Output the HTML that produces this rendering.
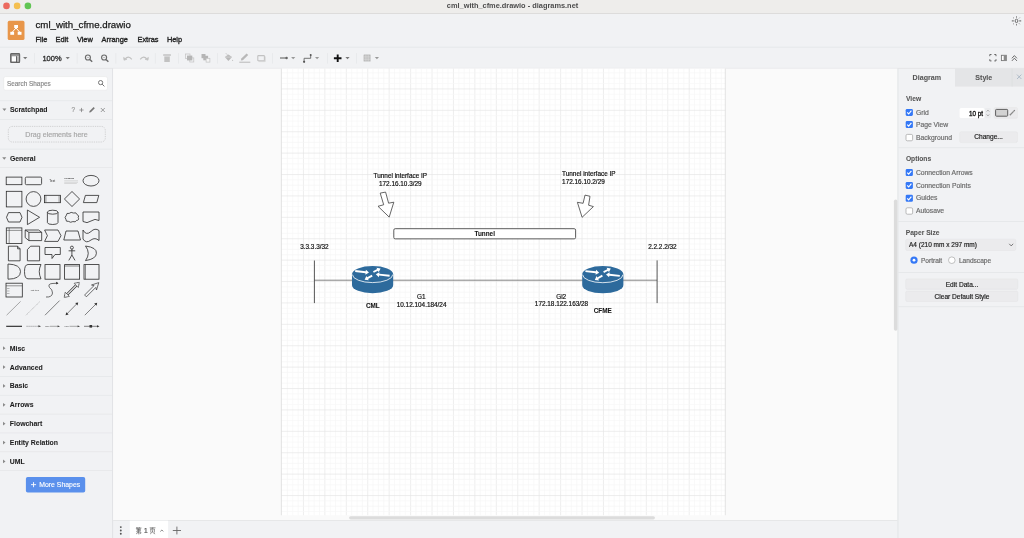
<!DOCTYPE html>
<html><head><meta charset="utf-8"><title>cml_with_cfme.drawio - diagrams.net</title>
<style>html,body{margin:0;padding:0;width:1024px;height:538px;overflow:hidden;background:#f1f2f4;font-family:"Liberation Sans",sans-serif}</style>
</head><body><svg width="1024" height="538" viewBox="0 0 1024 538" style="display:block;font-family:'Liberation Sans',sans-serif;will-change:transform"><rect x="0" y="0" width="1024" height="538" fill="#f1f2f4"/><rect x="0" y="0" width="1024" height="13.3" fill="#eeedeb"/><rect x="0" y="13" width="1024" height="0.8" fill="#d9d8d6"/><circle cx="6.5" cy="5.9" r="3.3" fill="#ec6a5e"/><circle cx="17.1" cy="5.9" r="3.3" fill="#f4bf4f"/><circle cx="27.9" cy="5.9" r="3.3" fill="#61c554"/><text x="512.5" y="7.8" font-size="7.4" fill="#4d4d4d" font-weight="bold" text-anchor="middle" >cml_with_cfme.drawio - diagrams.net</text><rect x="0" y="46.8" width="1024" height="0.7" fill="#e2e3e5"/><rect x="0" y="67.9" width="1024" height="0.7" fill="#dfe0e2"/><rect x="7.7" y="20.8" width="16.8" height="19.3" rx="1.6" fill="#e8964a"/><g fill="#fff"><rect x="14.2" y="25" width="3.8" height="3"/><rect x="10.3" y="31.8" width="3.8" height="3"/><rect x="17.7" y="31.8" width="3.8" height="3"/></g><path d="M16,28 L12.4,32 M16,28 L19.6,32" stroke="#fff" stroke-width="1.0" fill="none"/><text x="35.5" y="27.7" font-size="9.7" fill="#1a1a1a" font-weight="normal" text-anchor="start" stroke="#1a1a1a" stroke-width="0.25" >cml_with_cfme.drawio</text><text x="35.5" y="41.8" font-size="7.4" fill="#222" font-weight="normal" text-anchor="start" stroke="#222" stroke-width="0.33" >File</text><text x="55.5" y="41.8" font-size="7.4" fill="#222" font-weight="normal" text-anchor="start" stroke="#222" stroke-width="0.33" >Edit</text><text x="76.9" y="41.8" font-size="7.4" fill="#222" font-weight="normal" text-anchor="start" stroke="#222" stroke-width="0.33" >View</text><text x="101.6" y="41.8" font-size="7.4" fill="#222" font-weight="normal" text-anchor="start" stroke="#222" stroke-width="0.33" >Arrange</text><text x="137.5" y="41.8" font-size="7.4" fill="#222" font-weight="normal" text-anchor="start" stroke="#222" stroke-width="0.33" >Extras</text><text x="166.9" y="41.8" font-size="7.4" fill="#222" font-weight="normal" text-anchor="start" stroke="#222" stroke-width="0.33" >Help</text><g stroke="#6a6a6a" fill="none"><ellipse cx="1016.5" cy="20.9" rx="1.35" ry="1.75" stroke-width="1.0"/><line x1="1011.8" y1="20.9" x2="1013.8" y2="20.9" stroke-width="1.1"/><line x1="1019.2" y1="20.9" x2="1021.2" y2="20.9" stroke-width="1.1"/><line x1="1016.5" y1="16.4" x2="1016.5" y2="17.6" stroke-width="1.0"/><line x1="1016.5" y1="24.2" x2="1016.5" y2="25.4" stroke-width="1.0"/><line x1="1019.00" y1="23.40" x2="1019.80" y2="24.20" stroke-width="0.8"/><line x1="1019.00" y1="18.40" x2="1019.80" y2="17.60" stroke-width="0.8"/><line x1="1014.00" y1="23.40" x2="1013.20" y2="24.20" stroke-width="0.8"/><line x1="1014.00" y1="18.40" x2="1013.20" y2="17.60" stroke-width="0.8"/></g><rect x="112.3" y="68.6" width="0.8" height="470" fill="#dcdde0"/><rect x="3.7" y="76.6" width="103.8" height="13.6" rx="2" fill="#fff" stroke="#e3e3e3" stroke-width="0.5"/><text x="7" y="85.8" font-size="6.4" fill="#8a8a8a" font-weight="normal" text-anchor="start" stroke="#8a8a8a" stroke-width="0.18" >Search Shapes</text><g stroke="#666" stroke-width="0.9" fill="none"><circle cx="100.6" cy="82.6" r="2.1"/><line x1="102.1" y1="84.1" x2="104.4" y2="86.4"/></g><rect x="0" y="100.5" width="112.3" height="0.6" fill="#e2e3e5"/><path d="M2.4,108.6 L6.4,108.6 L4.4,111 Z" fill="#888"/><text x="10" y="112.3" font-size="6.9" fill="#1d1d1d" font-weight="bold" text-anchor="start" stroke="#1d1d1d" stroke-width="0.06" >Scratchpad</text><text x="71.5" y="112.4" font-size="6.4" fill="#999" font-weight="normal" text-anchor="start" stroke="#999" stroke-width="0.18" >?</text><g stroke="#777" stroke-width="0.7"><line x1="79.4" y1="110" x2="83.6" y2="110"/><line x1="81.5" y1="107.9" x2="81.5" y2="112.1"/></g><path d="M89.2,112.6 L89.6,111 L93.6,107 L94.8,108.2 L90.8,112.2 Z" fill="#777"/><g stroke="#777" stroke-width="0.7"><line x1="100.8" y1="108" x2="104.8" y2="112"/><line x1="104.8" y1="108" x2="100.8" y2="112"/></g><rect x="0" y="119" width="112.3" height="0.6" fill="#e2e3e5"/><rect x="8.3" y="126.4" width="97" height="15.6" rx="4" fill="none" stroke="#b8b8b8" stroke-width="0.7" stroke-dasharray="0.8,1"/><text x="56.5" y="136.6" font-size="7.1" fill="#a8a8a8" font-weight="normal" text-anchor="middle" stroke="#a8a8a8" stroke-width="0.18" >Drag elements here</text><rect x="0" y="148.8" width="112.3" height="0.6" fill="#e2e3e5"/><path d="M2.2,157.3 L6.3,157.3 L4.25,159.8 Z" fill="#888"/><text x="9.9" y="161.1" font-size="6.9" fill="#1d1d1d" font-weight="bold" text-anchor="start" stroke="#1d1d1d" stroke-width="0.06" >General</text><rect x="0" y="167.3" width="112.3" height="0.6" fill="#e2e3e5"/><rect x="0" y="338.30" width="112.3" height="0.6" fill="#e2e3e5"/><path d="M3.0,346.30 L5.5,348.20 L3.0,350.10 Z" fill="#8a8a8a"/><text x="9.8" y="350.70" font-size="6.9" fill="#1d1d1d" font-weight="bold" text-anchor="start" stroke="#1d1d1d" stroke-width="0.06" >Misc</text><rect x="0" y="357.17" width="112.3" height="0.6" fill="#e2e3e5"/><path d="M3.0,365.17 L5.5,367.07 L3.0,368.97 Z" fill="#8a8a8a"/><text x="9.8" y="369.57" font-size="6.9" fill="#1d1d1d" font-weight="bold" text-anchor="start" stroke="#1d1d1d" stroke-width="0.06" >Advanced</text><rect x="0" y="376.04" width="112.3" height="0.6" fill="#e2e3e5"/><path d="M3.0,384.04 L5.5,385.94 L3.0,387.84 Z" fill="#8a8a8a"/><text x="9.8" y="388.44" font-size="6.9" fill="#1d1d1d" font-weight="bold" text-anchor="start" stroke="#1d1d1d" stroke-width="0.06" >Basic</text><rect x="0" y="394.91" width="112.3" height="0.6" fill="#e2e3e5"/><path d="M3.0,402.91 L5.5,404.81 L3.0,406.71 Z" fill="#8a8a8a"/><text x="9.8" y="407.31" font-size="6.9" fill="#1d1d1d" font-weight="bold" text-anchor="start" stroke="#1d1d1d" stroke-width="0.06" >Arrows</text><rect x="0" y="413.78" width="112.3" height="0.6" fill="#e2e3e5"/><path d="M3.0,421.78 L5.5,423.68 L3.0,425.58 Z" fill="#8a8a8a"/><text x="9.8" y="426.18" font-size="6.9" fill="#1d1d1d" font-weight="bold" text-anchor="start" stroke="#1d1d1d" stroke-width="0.06" >Flowchart</text><rect x="0" y="432.65" width="112.3" height="0.6" fill="#e2e3e5"/><path d="M3.0,440.65 L5.5,442.55 L3.0,444.45 Z" fill="#8a8a8a"/><text x="9.8" y="445.05" font-size="6.9" fill="#1d1d1d" font-weight="bold" text-anchor="start" stroke="#1d1d1d" stroke-width="0.06" >Entity Relation</text><rect x="0" y="451.52" width="112.3" height="0.6" fill="#e2e3e5"/><path d="M3.0,459.52 L5.5,461.42 L3.0,463.32 Z" fill="#8a8a8a"/><text x="9.8" y="463.92" font-size="6.9" fill="#1d1d1d" font-weight="bold" text-anchor="start" stroke="#1d1d1d" stroke-width="0.06" >UML</text><rect x="0" y="470.39" width="112.3" height="0.6" fill="#e2e3e5"/><rect x="25.9" y="477" width="59.3" height="15.6" rx="1.8" fill="#5a90ec"/><path d="M33.55,482.1 L33.55,487.2 M31,484.65 L36.1,484.65" stroke="#fff" stroke-width="0.9"/><text x="39.2" y="487.1" font-size="6.9" fill="#fff" font-weight="normal" text-anchor="start" stroke="#fff" stroke-width="0.12" >More Shapes</text><rect x="113.1" y="68.6" width="784.4" height="451.7" fill="#fafafa"/><rect x="281.4" y="68.6" width="443.9" height="446.6" fill="#fff"/><g stroke-width="0.65"><line x1="287.38" y1="68.6" x2="287.38" y2="515.2" stroke="#f6f6f6"/><line x1="292.73" y1="68.6" x2="292.73" y2="515.2" stroke="#f6f6f6"/><line x1="298.09" y1="68.6" x2="298.09" y2="515.2" stroke="#f6f6f6"/><line x1="303.45" y1="68.6" x2="303.45" y2="515.2" stroke="#e4e4e4"/><line x1="308.81" y1="68.6" x2="308.81" y2="515.2" stroke="#f6f6f6"/><line x1="314.16" y1="68.6" x2="314.16" y2="515.2" stroke="#f6f6f6"/><line x1="319.52" y1="68.6" x2="319.52" y2="515.2" stroke="#f6f6f6"/><line x1="324.88" y1="68.6" x2="324.88" y2="515.2" stroke="#e4e4e4"/><line x1="330.24" y1="68.6" x2="330.24" y2="515.2" stroke="#f6f6f6"/><line x1="335.59" y1="68.6" x2="335.59" y2="515.2" stroke="#f6f6f6"/><line x1="340.95" y1="68.6" x2="340.95" y2="515.2" stroke="#f6f6f6"/><line x1="346.31" y1="68.6" x2="346.31" y2="515.2" stroke="#e4e4e4"/><line x1="351.67" y1="68.6" x2="351.67" y2="515.2" stroke="#f6f6f6"/><line x1="357.02" y1="68.6" x2="357.02" y2="515.2" stroke="#f6f6f6"/><line x1="362.38" y1="68.6" x2="362.38" y2="515.2" stroke="#f6f6f6"/><line x1="367.74" y1="68.6" x2="367.74" y2="515.2" stroke="#e4e4e4"/><line x1="373.10" y1="68.6" x2="373.10" y2="515.2" stroke="#f6f6f6"/><line x1="378.45" y1="68.6" x2="378.45" y2="515.2" stroke="#f6f6f6"/><line x1="383.81" y1="68.6" x2="383.81" y2="515.2" stroke="#f6f6f6"/><line x1="389.17" y1="68.6" x2="389.17" y2="515.2" stroke="#e4e4e4"/><line x1="394.53" y1="68.6" x2="394.53" y2="515.2" stroke="#f6f6f6"/><line x1="399.88" y1="68.6" x2="399.88" y2="515.2" stroke="#f6f6f6"/><line x1="405.24" y1="68.6" x2="405.24" y2="515.2" stroke="#f6f6f6"/><line x1="410.60" y1="68.6" x2="410.60" y2="515.2" stroke="#e4e4e4"/><line x1="415.96" y1="68.6" x2="415.96" y2="515.2" stroke="#f6f6f6"/><line x1="421.31" y1="68.6" x2="421.31" y2="515.2" stroke="#f6f6f6"/><line x1="426.67" y1="68.6" x2="426.67" y2="515.2" stroke="#f6f6f6"/><line x1="432.03" y1="68.6" x2="432.03" y2="515.2" stroke="#e4e4e4"/><line x1="437.39" y1="68.6" x2="437.39" y2="515.2" stroke="#f6f6f6"/><line x1="442.75" y1="68.6" x2="442.75" y2="515.2" stroke="#f6f6f6"/><line x1="448.10" y1="68.6" x2="448.10" y2="515.2" stroke="#f6f6f6"/><line x1="453.46" y1="68.6" x2="453.46" y2="515.2" stroke="#e4e4e4"/><line x1="458.82" y1="68.6" x2="458.82" y2="515.2" stroke="#f6f6f6"/><line x1="464.17" y1="68.6" x2="464.17" y2="515.2" stroke="#f6f6f6"/><line x1="469.53" y1="68.6" x2="469.53" y2="515.2" stroke="#f6f6f6"/><line x1="474.89" y1="68.6" x2="474.89" y2="515.2" stroke="#e4e4e4"/><line x1="480.25" y1="68.6" x2="480.25" y2="515.2" stroke="#f6f6f6"/><line x1="485.61" y1="68.6" x2="485.61" y2="515.2" stroke="#f6f6f6"/><line x1="490.96" y1="68.6" x2="490.96" y2="515.2" stroke="#f6f6f6"/><line x1="496.32" y1="68.6" x2="496.32" y2="515.2" stroke="#e4e4e4"/><line x1="501.68" y1="68.6" x2="501.68" y2="515.2" stroke="#f6f6f6"/><line x1="507.03" y1="68.6" x2="507.03" y2="515.2" stroke="#f6f6f6"/><line x1="512.39" y1="68.6" x2="512.39" y2="515.2" stroke="#f6f6f6"/><line x1="517.75" y1="68.6" x2="517.75" y2="515.2" stroke="#e4e4e4"/><line x1="523.11" y1="68.6" x2="523.11" y2="515.2" stroke="#f6f6f6"/><line x1="528.46" y1="68.6" x2="528.46" y2="515.2" stroke="#f6f6f6"/><line x1="533.82" y1="68.6" x2="533.82" y2="515.2" stroke="#f6f6f6"/><line x1="539.18" y1="68.6" x2="539.18" y2="515.2" stroke="#e4e4e4"/><line x1="544.54" y1="68.6" x2="544.54" y2="515.2" stroke="#f6f6f6"/><line x1="549.89" y1="68.6" x2="549.89" y2="515.2" stroke="#f6f6f6"/><line x1="555.25" y1="68.6" x2="555.25" y2="515.2" stroke="#f6f6f6"/><line x1="560.61" y1="68.6" x2="560.61" y2="515.2" stroke="#e4e4e4"/><line x1="565.97" y1="68.6" x2="565.97" y2="515.2" stroke="#f6f6f6"/><line x1="571.33" y1="68.6" x2="571.33" y2="515.2" stroke="#f6f6f6"/><line x1="576.68" y1="68.6" x2="576.68" y2="515.2" stroke="#f6f6f6"/><line x1="582.04" y1="68.6" x2="582.04" y2="515.2" stroke="#e4e4e4"/><line x1="587.40" y1="68.6" x2="587.40" y2="515.2" stroke="#f6f6f6"/><line x1="592.75" y1="68.6" x2="592.75" y2="515.2" stroke="#f6f6f6"/><line x1="598.11" y1="68.6" x2="598.11" y2="515.2" stroke="#f6f6f6"/><line x1="603.47" y1="68.6" x2="603.47" y2="515.2" stroke="#e4e4e4"/><line x1="608.83" y1="68.6" x2="608.83" y2="515.2" stroke="#f6f6f6"/><line x1="614.18" y1="68.6" x2="614.18" y2="515.2" stroke="#f6f6f6"/><line x1="619.54" y1="68.6" x2="619.54" y2="515.2" stroke="#f6f6f6"/><line x1="624.90" y1="68.6" x2="624.90" y2="515.2" stroke="#e4e4e4"/><line x1="630.26" y1="68.6" x2="630.26" y2="515.2" stroke="#f6f6f6"/><line x1="635.62" y1="68.6" x2="635.62" y2="515.2" stroke="#f6f6f6"/><line x1="640.97" y1="68.6" x2="640.97" y2="515.2" stroke="#f6f6f6"/><line x1="646.33" y1="68.6" x2="646.33" y2="515.2" stroke="#e4e4e4"/><line x1="651.69" y1="68.6" x2="651.69" y2="515.2" stroke="#f6f6f6"/><line x1="657.04" y1="68.6" x2="657.04" y2="515.2" stroke="#f6f6f6"/><line x1="662.40" y1="68.6" x2="662.40" y2="515.2" stroke="#f6f6f6"/><line x1="667.76" y1="68.6" x2="667.76" y2="515.2" stroke="#e4e4e4"/><line x1="673.12" y1="68.6" x2="673.12" y2="515.2" stroke="#f6f6f6"/><line x1="678.47" y1="68.6" x2="678.47" y2="515.2" stroke="#f6f6f6"/><line x1="683.83" y1="68.6" x2="683.83" y2="515.2" stroke="#f6f6f6"/><line x1="689.19" y1="68.6" x2="689.19" y2="515.2" stroke="#e4e4e4"/><line x1="694.55" y1="68.6" x2="694.55" y2="515.2" stroke="#f6f6f6"/><line x1="699.90" y1="68.6" x2="699.90" y2="515.2" stroke="#f6f6f6"/><line x1="705.26" y1="68.6" x2="705.26" y2="515.2" stroke="#f6f6f6"/><line x1="710.62" y1="68.6" x2="710.62" y2="515.2" stroke="#e4e4e4"/><line x1="715.98" y1="68.6" x2="715.98" y2="515.2" stroke="#f6f6f6"/><line x1="721.34" y1="68.6" x2="721.34" y2="515.2" stroke="#f6f6f6"/><line x1="281.4" y1="72.87" x2="725.3" y2="72.87" stroke="#f6f6f6"/><line x1="281.4" y1="78.22" x2="725.3" y2="78.22" stroke="#f6f6f6"/><line x1="281.4" y1="83.57" x2="725.3" y2="83.57" stroke="#f6f6f6"/><line x1="281.4" y1="88.92" x2="725.3" y2="88.92" stroke="#e4e4e4"/><line x1="281.4" y1="94.27" x2="725.3" y2="94.27" stroke="#f6f6f6"/><line x1="281.4" y1="99.62" x2="725.3" y2="99.62" stroke="#f6f6f6"/><line x1="281.4" y1="104.97" x2="725.3" y2="104.97" stroke="#f6f6f6"/><line x1="281.4" y1="110.32" x2="725.3" y2="110.32" stroke="#e4e4e4"/><line x1="281.4" y1="115.67" x2="725.3" y2="115.67" stroke="#f6f6f6"/><line x1="281.4" y1="121.02" x2="725.3" y2="121.02" stroke="#f6f6f6"/><line x1="281.4" y1="126.37" x2="725.3" y2="126.37" stroke="#f6f6f6"/><line x1="281.4" y1="131.72" x2="725.3" y2="131.72" stroke="#e4e4e4"/><line x1="281.4" y1="137.07" x2="725.3" y2="137.07" stroke="#f6f6f6"/><line x1="281.4" y1="142.42" x2="725.3" y2="142.42" stroke="#f6f6f6"/><line x1="281.4" y1="147.77" x2="725.3" y2="147.77" stroke="#f6f6f6"/><line x1="281.4" y1="153.12" x2="725.3" y2="153.12" stroke="#e4e4e4"/><line x1="281.4" y1="158.47" x2="725.3" y2="158.47" stroke="#f6f6f6"/><line x1="281.4" y1="163.82" x2="725.3" y2="163.82" stroke="#f6f6f6"/><line x1="281.4" y1="169.17" x2="725.3" y2="169.17" stroke="#f6f6f6"/><line x1="281.4" y1="174.52" x2="725.3" y2="174.52" stroke="#e4e4e4"/><line x1="281.4" y1="179.87" x2="725.3" y2="179.87" stroke="#f6f6f6"/><line x1="281.4" y1="185.22" x2="725.3" y2="185.22" stroke="#f6f6f6"/><line x1="281.4" y1="190.57" x2="725.3" y2="190.57" stroke="#f6f6f6"/><line x1="281.4" y1="195.92" x2="725.3" y2="195.92" stroke="#e4e4e4"/><line x1="281.4" y1="201.27" x2="725.3" y2="201.27" stroke="#f6f6f6"/><line x1="281.4" y1="206.62" x2="725.3" y2="206.62" stroke="#f6f6f6"/><line x1="281.4" y1="211.97" x2="725.3" y2="211.97" stroke="#f6f6f6"/><line x1="281.4" y1="217.32" x2="725.3" y2="217.32" stroke="#e4e4e4"/><line x1="281.4" y1="222.67" x2="725.3" y2="222.67" stroke="#f6f6f6"/><line x1="281.4" y1="228.02" x2="725.3" y2="228.02" stroke="#f6f6f6"/><line x1="281.4" y1="233.37" x2="725.3" y2="233.37" stroke="#f6f6f6"/><line x1="281.4" y1="238.72" x2="725.3" y2="238.72" stroke="#e4e4e4"/><line x1="281.4" y1="244.07" x2="725.3" y2="244.07" stroke="#f6f6f6"/><line x1="281.4" y1="249.42" x2="725.3" y2="249.42" stroke="#f6f6f6"/><line x1="281.4" y1="254.77" x2="725.3" y2="254.77" stroke="#f6f6f6"/><line x1="281.4" y1="260.12" x2="725.3" y2="260.12" stroke="#e4e4e4"/><line x1="281.4" y1="265.47" x2="725.3" y2="265.47" stroke="#f6f6f6"/><line x1="281.4" y1="270.82" x2="725.3" y2="270.82" stroke="#f6f6f6"/><line x1="281.4" y1="276.17" x2="725.3" y2="276.17" stroke="#f6f6f6"/><line x1="281.4" y1="281.52" x2="725.3" y2="281.52" stroke="#e4e4e4"/><line x1="281.4" y1="286.87" x2="725.3" y2="286.87" stroke="#f6f6f6"/><line x1="281.4" y1="292.22" x2="725.3" y2="292.22" stroke="#f6f6f6"/><line x1="281.4" y1="297.57" x2="725.3" y2="297.57" stroke="#f6f6f6"/><line x1="281.4" y1="302.92" x2="725.3" y2="302.92" stroke="#e4e4e4"/><line x1="281.4" y1="308.27" x2="725.3" y2="308.27" stroke="#f6f6f6"/><line x1="281.4" y1="313.62" x2="725.3" y2="313.62" stroke="#f6f6f6"/><line x1="281.4" y1="318.97" x2="725.3" y2="318.97" stroke="#f6f6f6"/><line x1="281.4" y1="324.32" x2="725.3" y2="324.32" stroke="#e4e4e4"/><line x1="281.4" y1="329.67" x2="725.3" y2="329.67" stroke="#f6f6f6"/><line x1="281.4" y1="335.02" x2="725.3" y2="335.02" stroke="#f6f6f6"/><line x1="281.4" y1="340.37" x2="725.3" y2="340.37" stroke="#f6f6f6"/><line x1="281.4" y1="345.72" x2="725.3" y2="345.72" stroke="#e4e4e4"/><line x1="281.4" y1="351.07" x2="725.3" y2="351.07" stroke="#f6f6f6"/><line x1="281.4" y1="356.42" x2="725.3" y2="356.42" stroke="#f6f6f6"/><line x1="281.4" y1="361.77" x2="725.3" y2="361.77" stroke="#f6f6f6"/><line x1="281.4" y1="367.12" x2="725.3" y2="367.12" stroke="#e4e4e4"/><line x1="281.4" y1="372.47" x2="725.3" y2="372.47" stroke="#f6f6f6"/><line x1="281.4" y1="377.82" x2="725.3" y2="377.82" stroke="#f6f6f6"/><line x1="281.4" y1="383.17" x2="725.3" y2="383.17" stroke="#f6f6f6"/><line x1="281.4" y1="388.52" x2="725.3" y2="388.52" stroke="#e4e4e4"/><line x1="281.4" y1="393.87" x2="725.3" y2="393.87" stroke="#f6f6f6"/><line x1="281.4" y1="399.22" x2="725.3" y2="399.22" stroke="#f6f6f6"/><line x1="281.4" y1="404.57" x2="725.3" y2="404.57" stroke="#f6f6f6"/><line x1="281.4" y1="409.92" x2="725.3" y2="409.92" stroke="#e4e4e4"/><line x1="281.4" y1="415.27" x2="725.3" y2="415.27" stroke="#f6f6f6"/><line x1="281.4" y1="420.62" x2="725.3" y2="420.62" stroke="#f6f6f6"/><line x1="281.4" y1="425.97" x2="725.3" y2="425.97" stroke="#f6f6f6"/><line x1="281.4" y1="431.32" x2="725.3" y2="431.32" stroke="#e4e4e4"/><line x1="281.4" y1="436.67" x2="725.3" y2="436.67" stroke="#f6f6f6"/><line x1="281.4" y1="442.02" x2="725.3" y2="442.02" stroke="#f6f6f6"/><line x1="281.4" y1="447.37" x2="725.3" y2="447.37" stroke="#f6f6f6"/><line x1="281.4" y1="452.72" x2="725.3" y2="452.72" stroke="#e4e4e4"/><line x1="281.4" y1="458.07" x2="725.3" y2="458.07" stroke="#f6f6f6"/><line x1="281.4" y1="463.42" x2="725.3" y2="463.42" stroke="#f6f6f6"/><line x1="281.4" y1="468.77" x2="725.3" y2="468.77" stroke="#f6f6f6"/><line x1="281.4" y1="474.12" x2="725.3" y2="474.12" stroke="#e4e4e4"/><line x1="281.4" y1="479.47" x2="725.3" y2="479.47" stroke="#f6f6f6"/><line x1="281.4" y1="484.82" x2="725.3" y2="484.82" stroke="#f6f6f6"/><line x1="281.4" y1="490.17" x2="725.3" y2="490.17" stroke="#f6f6f6"/><line x1="281.4" y1="495.52" x2="725.3" y2="495.52" stroke="#e4e4e4"/><line x1="281.4" y1="500.87" x2="725.3" y2="500.87" stroke="#f6f6f6"/><line x1="281.4" y1="506.22" x2="725.3" y2="506.22" stroke="#f6f6f6"/><line x1="281.4" y1="511.57" x2="725.3" y2="511.57" stroke="#f6f6f6"/></g><line x1="281.4" y1="68.6" x2="281.4" y2="515.2" stroke="#dcdcdc" stroke-width="0.8"/><line x1="725.3" y1="68.6" x2="725.3" y2="515.2" stroke="#dcdcdc" stroke-width="0.8"/><rect x="349.1" y="516.2" width="305.8" height="3.2" rx="1.6" fill="#dcdcdc"/><rect x="893.9" y="199.5" width="3.6" height="131.3" rx="1.8" fill="#dcdcdc"/><rect x="113.1" y="520" width="784.4" height="0.7" fill="#e0e1e3"/><rect x="129.8" y="520.7" width="38.3" height="17.3" fill="#fff"/><g fill="#555"><circle cx="120.8" cy="527.1" r="0.95"/><circle cx="120.8" cy="530.5" r="0.95"/><circle cx="120.8" cy="533.7" r="0.95"/></g><g transform="translate(136.1,527.2)" stroke="#555" stroke-width="0.6" fill="none" stroke-linecap="round"><path d="M0.9,0.2 L0.3,1.3 M0.6,0.8 L2.2,0.8 M1.3,1.0 L1.7,1.6 M3.2,0.2 L2.7,1.3 M3.0,0.8 L5.0,0.8 M3.7,1.0 L4.1,1.6"/><path d="M0.8,2.3 L4.3,2.3 L4.3,3.5 L0.9,3.5 L0.7,4.8 L4.8,4.8 L4.6,6.3 L3.9,6.4"/><path d="M2.6,1.9 L2.6,6.8 M2.4,4.9 L0.3,6.5"/></g><text x="144.1" y="533.4" font-size="6.6" fill="#555" font-weight="normal" text-anchor="start" stroke="#555" stroke-width="0.2" >1</text><g transform="translate(149.9,527.2)" stroke="#555" stroke-width="0.6" fill="none" stroke-linecap="round"><path d="M0.2,0.6 L5.2,0.6 M2.7,0.6 L2.4,1.6 M0.9,1.8 L0.9,5.0 M0.9,1.8 L4.5,1.8 L4.5,5.0 M2.7,2.7 L2.7,4.5 M2.6,4.6 L0.5,6.6 M3.0,5.3 L4.9,6.6"/></g><path d="M160.4,531.4 L161.8,530 L163.2,531.4" stroke="#555" stroke-width="0.8" fill="none"/><g stroke="#666" stroke-width="0.9"><line x1="172.8" y1="530.5" x2="181" y2="530.5"/><line x1="176.9" y1="526.6" x2="176.9" y2="534.4"/></g><rect x="897.5" y="68.6" width="0.9" height="470" fill="#e2e3e5"/><rect x="955" y="68.6" width="57" height="18" fill="#e4e5e7"/><rect x="1012" y="68.6" width="12" height="18" fill="#e4e5e7"/><rect x="1011.8" y="68.6" width="0.5" height="18" fill="#d8d9db"/><text x="926.8" y="80" font-size="7.1" fill="#555" font-weight="bold" text-anchor="middle" stroke="#555" stroke-width="0.06" >Diagram</text><text x="983.8" y="80" font-size="7.1" fill="#555" font-weight="bold" text-anchor="middle" stroke="#555" stroke-width="0.06" >Style</text><g stroke="#9ab" stroke-width="0.7"><line x1="1017" y1="74.6" x2="1021.4" y2="79"/><line x1="1021.4" y1="74.6" x2="1017" y2="79"/></g><text x="906" y="100.6" font-size="6.7" fill="#555" font-weight="bold" text-anchor="start" stroke="#555" stroke-width="0.06" >View</text><rect x="905.7" y="108.9" width="7.2" height="7" rx="1.3" fill="#3478f6"/><path d="M907.2,112.4 L908.7,114.0 L911.4000000000001,110.7" stroke="#fff" stroke-width="1.15" fill="none"/><text x="915.9000000000001" y="114.5" font-size="6.78" fill="#6b6b6b" font-weight="normal" text-anchor="start" stroke="#6b6b6b" stroke-width="0.18" >Grid</text><rect x="905.7" y="121.1" width="7.2" height="7" rx="1.3" fill="#3478f6"/><path d="M907.2,124.6 L908.7,126.19999999999999 L911.4000000000001,122.89999999999999" stroke="#fff" stroke-width="1.15" fill="none"/><text x="915.9000000000001" y="126.69999999999999" font-size="6.78" fill="#6b6b6b" font-weight="normal" text-anchor="start" stroke="#6b6b6b" stroke-width="0.18" >Page View</text><rect x="906.0" y="134.4" width="6.6" height="6.4" rx="1.3" fill="#fff" stroke="#999" stroke-width="0.65"/><text x="915.9000000000001" y="139.7" font-size="6.78" fill="#6b6b6b" font-weight="normal" text-anchor="start" stroke="#6b6b6b" stroke-width="0.18" >Background</text><rect x="959.6" y="108" width="24.8" height="10" rx="1.5" fill="#fff"/><text x="983.0" y="115.5" font-size="6.3" fill="#1a1a1a" font-weight="normal" text-anchor="end" stroke="#1a1a1a" stroke-width="0.35" >10 pt</text><rect x="985" y="108" width="5.9" height="10.2" rx="1.2" fill="#ebecee"/><path d="M986.6,111.6 L987.95,110 L989.3,111.6 M986.6,114.4 L987.95,116 L989.3,114.4" stroke="#999" stroke-width="0.7" fill="none"/><rect x="994" y="107.5" width="23.5" height="10.9" rx="1.5" fill="#ebebed" stroke="#e2e2e4" stroke-width="0.4"/><rect x="995.6" y="109.4" width="12.1" height="6.8" rx="0.8" fill="#d2d2d2" stroke="#5e5e5e" stroke-width="1.0"/><path d="M1009.8,115.2 L1013.6,111.4" stroke="#8a8a8a" stroke-width="1.3"/><path d="M1013.2,111 L1014.4,109.8 L1015.2,110.6 L1014,111.8 Z" fill="#777"/><rect x="959.7" y="131.7" width="57.8" height="10.9" rx="1.5" fill="#ebebed" stroke="#e2e2e4" stroke-width="0.4"/><text x="988.5" y="139.4" font-size="6.6" fill="#222" font-weight="normal" text-anchor="middle" stroke="#222" stroke-width="0.18" >Change...</text><rect x="898.4" y="147.5" width="125.6" height="0.6" fill="#e0e1e3"/><text x="905.9" y="161.4" font-size="6.7" fill="#555" font-weight="bold" text-anchor="start" stroke="#555" stroke-width="0.06" >Options</text><rect x="905.7" y="169.1" width="7.2" height="7" rx="1.3" fill="#3478f6"/><path d="M907.2,172.6 L908.7,174.2 L911.4000000000001,170.9" stroke="#fff" stroke-width="1.15" fill="none"/><text x="915.9000000000001" y="174.7" font-size="6.78" fill="#6b6b6b" font-weight="normal" text-anchor="start" stroke="#6b6b6b" stroke-width="0.18" >Connection Arrows</text><rect x="905.7" y="181.9" width="7.2" height="7" rx="1.3" fill="#3478f6"/><path d="M907.2,185.4 L908.7,187.0 L911.4000000000001,183.70000000000002" stroke="#fff" stroke-width="1.15" fill="none"/><text x="915.9000000000001" y="187.5" font-size="6.78" fill="#6b6b6b" font-weight="normal" text-anchor="start" stroke="#6b6b6b" stroke-width="0.18" >Connection Points</text><rect x="905.7" y="194.8" width="7.2" height="7" rx="1.3" fill="#3478f6"/><path d="M907.2,198.3 L908.7,199.9 L911.4000000000001,196.60000000000002" stroke="#fff" stroke-width="1.15" fill="none"/><text x="915.9000000000001" y="200.4" font-size="6.78" fill="#6b6b6b" font-weight="normal" text-anchor="start" stroke="#6b6b6b" stroke-width="0.18" >Guides</text><rect x="906.0" y="207.8" width="6.6" height="6.4" rx="1.3" fill="#fff" stroke="#999" stroke-width="0.65"/><text x="915.9000000000001" y="213.1" font-size="6.78" fill="#6b6b6b" font-weight="normal" text-anchor="start" stroke="#6b6b6b" stroke-width="0.18" >Autosave</text><rect x="898.4" y="221.3" width="125.6" height="0.6" fill="#e0e1e3"/><text x="905.7" y="234.5" font-size="6.7" fill="#555" font-weight="bold" text-anchor="start" stroke="#555" stroke-width="0.06" >Paper Size</text><rect x="905.7" y="239.2" width="110.1" height="11.3" rx="1.5" fill="#ebebed" stroke="#e0e0e2" stroke-width="0.4"/><text x="909" y="247.4" font-size="6.5" fill="#222" font-weight="normal" text-anchor="start" stroke="#222" stroke-width="0.18" >A4 (210 mm x 297 mm)</text><path d="M1009.2,243.8 L1011.2,245.9 L1013.2,243.8" stroke="#444" stroke-width="0.7" fill="none"/><circle cx="914" cy="260.2" r="3.6" fill="#3478f6"/><circle cx="914" cy="260.2" r="1.4" fill="#fff"/><text x="920.9" y="262.6" font-size="6.6" fill="#6b6b6b" font-weight="normal" text-anchor="start" stroke="#6b6b6b" stroke-width="0.18" >Portrait</text><circle cx="951.8" cy="260.2" r="3.3" fill="#fff" stroke="#999" stroke-width="0.6"/><text x="958.9" y="262.6" font-size="6.6" fill="#6b6b6b" font-weight="normal" text-anchor="start" stroke="#6b6b6b" stroke-width="0.18" >Landscape</text><rect x="898.4" y="272" width="125.6" height="0.6" fill="#e0e1e3"/><rect x="905.7" y="278.9" width="112.1" height="10.5" rx="1.5" fill="#ebebed" stroke="#e0e0e2" stroke-width="0.4"/><text x="962" y="286.6" font-size="6.6" fill="#222" font-weight="normal" text-anchor="middle" stroke="#222" stroke-width="0.18" >Edit Data...</text><rect x="905.7" y="291.1" width="112.1" height="10.4" rx="1.5" fill="#ebebed" stroke="#e0e0e2" stroke-width="0.4"/><text x="962" y="298.7" font-size="6.6" fill="#222" font-weight="normal" text-anchor="middle" stroke="#222" stroke-width="0.18" >Clear Default Style</text><rect x="898.4" y="306.5" width="125.6" height="0.6" fill="#e0e1e3"/><line x1="314.4" y1="280.2" x2="657.1" y2="280.2" stroke="#6e6e6e" stroke-width="0.85"/><line x1="314.4" y1="260.5" x2="314.4" y2="303.1" stroke="#3a3a3a" stroke-width="0.85"/><line x1="657.1" y1="260.4" x2="657.1" y2="303.1" stroke="#3a3a3a" stroke-width="0.85"/><rect x="393.8" y="228.7" width="181.8" height="10.15" rx="1.4" fill="#fff" stroke="#4a4a4a" stroke-width="0.9"/><polygon points="380.2,193.1 385.6,192.1 388.6,203.2 393.8,202.2 389.2,217.1 378,206.3 383.7,204.75" fill="#fff" stroke="#333" stroke-width="0.75" stroke-linejoin="miter"/><polygon points="585,195.1 590,196.3 588.6,205.2 593.4,206.6 582.1,217.3 577.4,202.3 583.1,203.3" fill="#fff" stroke="#333" stroke-width="0.75"/><path d="M352.0,274.2 A20.6,8.2 0 0 1 393.2,274.2 L393.2,285.0 A20.6,8.2 0 0 1 352.0,285.0 Z" fill="#2d6a9c"/><path d="M352.4,274.5 A20.200000000000003,8.1 0 0 0 392.8,274.5" stroke="#fff" stroke-width="0.8" fill="none"/><polygon points="355.09,271.94 365.51,273.15 365.33,274.69 369.00,272.60 365.91,269.73 365.73,271.26 355.31,270.06" fill="#fff"/><polygon points="389.70,274.86 379.28,273.72 379.45,272.18 375.80,274.30 378.91,277.15 379.08,275.61 389.50,276.74" fill="#fff"/><polygon points="373.82,272.85 377.98,270.77 378.68,272.16 380.60,268.40 376.44,267.68 377.13,269.07 372.98,271.15" fill="#fff"/><polygon points="371.74,274.77 367.12,277.32 366.37,275.97 364.60,279.80 368.79,280.34 368.04,278.99 372.66,276.43" fill="#fff"/><path d="M582.2,274.3 A20.6,8.2 0 0 1 623.4000000000001,274.3 L623.4000000000001,285.1 A20.6,8.2 0 0 1 582.2,285.1 Z" fill="#2d6a9c"/><path d="M582.6,274.6 A20.200000000000003,8.1 0 0 0 623.0000000000001,274.6" stroke="#fff" stroke-width="0.8" fill="none"/><polygon points="585.29,272.04 595.71,273.25 595.53,274.79 599.20,272.70 596.11,269.83 595.93,271.36 585.51,270.16" fill="#fff"/><polygon points="619.90,274.96 609.48,273.82 609.65,272.28 606.00,274.40 609.11,277.25 609.28,275.71 619.70,276.84" fill="#fff"/><polygon points="604.02,272.95 608.18,270.87 608.88,272.26 610.80,268.50 606.64,267.78 607.33,269.17 603.18,271.25" fill="#fff"/><polygon points="601.94,274.87 597.32,277.42 596.57,276.07 594.80,279.90 598.99,280.44 598.24,279.09 602.86,276.53" fill="#fff"/><text x="400.3" y="178.3" font-size="6.4" fill="#111" font-weight="normal" text-anchor="middle" stroke="#111" stroke-width="0.18" >Tunnel interface IP</text><text x="400.3" y="185.9" font-size="6.4" fill="#111" font-weight="normal" text-anchor="middle" stroke="#111" stroke-width="0.18" >172.16.10.3/29</text><text x="562.1" y="175.7" font-size="6.4" fill="#111" font-weight="normal" text-anchor="start" stroke="#111" stroke-width="0.18" >Tunnel interface IP</text><text x="562.1" y="183.9" font-size="6.4" fill="#111" font-weight="normal" text-anchor="start" stroke="#111" stroke-width="0.18" >172.16.10.2/29</text><text x="484.7" y="235.8" font-size="6.4" fill="#111" font-weight="bold" text-anchor="middle" stroke="#111" stroke-width="0.06" >Tunnel</text><text x="300.2" y="249.2" font-size="6.4" fill="#111" font-weight="normal" text-anchor="start" stroke="#111" stroke-width="0.18" >3.3.3.3/32</text><text x="648.2" y="249.1" font-size="6.4" fill="#111" font-weight="normal" text-anchor="start" stroke="#111" stroke-width="0.18" >2.2.2.2/32</text><text x="372.8" y="308" font-size="6.4" fill="#111" font-weight="bold" text-anchor="middle" stroke="#111" stroke-width="0.06" >CML</text><text x="602.8" y="313" font-size="6.4" fill="#111" font-weight="bold" text-anchor="middle" stroke="#111" stroke-width="0.06" >CFME</text><text x="421.3" y="298.7" font-size="6.4" fill="#111" font-weight="normal" text-anchor="middle" stroke="#111" stroke-width="0.18" >G1</text><text x="421.6" y="306.5" font-size="6.4" fill="#111" font-weight="normal" text-anchor="middle" stroke="#111" stroke-width="0.18" >10.12.104.184/24</text><text x="561.2" y="298.6" font-size="6.4" fill="#111" font-weight="normal" text-anchor="middle" stroke="#111" stroke-width="0.18" >Gi2</text><text x="561.5" y="306.4" font-size="6.4" fill="#111" font-weight="normal" text-anchor="middle" stroke="#111" stroke-width="0.18" >172.18.122.163/28</text><text x="42.4" y="61.0" font-size="7.5" fill="#2a2a2a" font-weight="normal" text-anchor="start" stroke="#2a2a2a" stroke-width="0.3" >100%</text><rect x="10.8" y="53.6" width="8.7" height="8.7" rx="0.9" fill="#fff" stroke="#666" stroke-width="1.2"/><rect x="10.8" y="53.6" width="8.7" height="2.7" fill="#999"/><rect x="16.5" y="56.3" width="3" height="6" fill="#bbb"/><rect x="10.8" y="53.6" width="8.7" height="8.7" rx="0.9" fill="none" stroke="#666" stroke-width="1.2"/><line x1="16.5" y1="56.2" x2="16.5" y2="62.3" stroke="#555" stroke-width="0.9"/><path d="M23.1,57.0 L27.3,57.0 L25.200000000000003,59.3 Z" fill="#777"/><rect x="34.3" y="53.1" width="0.6" height="10.5" fill="#e3e4e6"/><rect x="76.8" y="53.1" width="0.6" height="10.5" fill="#e3e4e6"/><rect x="115.6" y="53.1" width="0.6" height="10.5" fill="#e3e4e6"/><rect x="154.9" y="53.1" width="0.6" height="10.5" fill="#e3e4e6"/><rect x="178" y="53.1" width="0.6" height="10.5" fill="#e3e4e6"/><rect x="217.3" y="53.1" width="0.6" height="10.5" fill="#e3e4e6"/><rect x="272.4" y="53.1" width="0.6" height="10.5" fill="#e3e4e6"/><rect x="327" y="53.1" width="0.6" height="10.5" fill="#e3e4e6"/><rect x="356.4" y="53.1" width="0.6" height="10.5" fill="#e3e4e6"/><path d="M65.6,57.0 L69.8,57.0 L67.69999999999999,59.3 Z" fill="#777"/><g stroke="#6a6a6a" fill="none"><circle cx="87.9" cy="57.5" r="2.5" stroke-width="1.15"/><line x1="89.80000000000001" y1="59.4" x2="92.2" y2="61.8" stroke-width="1.4"/><line x1="86.80000000000001" y1="57.5" x2="89.0" y2="57.5" stroke="#aaa" stroke-width="0.7"/></g><g stroke="#6a6a6a" fill="none"><circle cx="104.1" cy="57.5" r="2.5" stroke-width="1.15"/><line x1="106.0" y1="59.4" x2="108.39999999999999" y2="61.8" stroke-width="1.4"/><line x1="103.0" y1="57.5" x2="105.19999999999999" y2="57.5" stroke="#aaa" stroke-width="0.7"/></g><path d="M125,59.2 Q128.5,54.8 131.8,59.4" stroke="#c2c2c2" stroke-width="1.2" fill="none"/><path d="M123.5,57.4 L124,60.3 L127,59.3 Z" fill="#c2c2c2" stroke="#c2c2c2" stroke-width="0.6"/><path d="M147,59.2 Q143.5,54.8 140.2,59.4" stroke="#c2c2c2" stroke-width="1.2" fill="none"/><path d="M148.5,57.4 L148,60.3 L145,59.3 Z" fill="#c2c2c2" stroke="#c2c2c2" stroke-width="0.6"/><rect x="163.1" y="54.2" width="7.9" height="1.5" rx="0.5" fill="#c2c2c2"/><rect x="164.3" y="56.4" width="5.5" height="5.6" fill="#c2c2c2"/><rect x="185.5" y="54" width="4.5" height="4.5" fill="none" stroke="#c2c2c2" stroke-width="0.7"/><rect x="189.8" y="57.9" width="4" height="4.1" fill="none" stroke="#c2c2c2" stroke-width="0.7"/><rect x="187" y="55.6" width="5.3" height="4.8" fill="#b5b5b5"/><rect x="201.5" y="54" width="4" height="4.2" fill="#b5b5b5"/><rect x="203.3" y="55.8" width="4.8" height="4.5" fill="#b5b5b5"/><rect x="206.1" y="58.3" width="3.8" height="3.8" fill="#f5f5f5" stroke="#c2c2c2" stroke-width="0.7"/><path d="M224.8,57 L228.4,54.6 L232,57 L228.4,61 Z" fill="#b8b8b8"/><path d="M225.2,57.1 L231.6,57.1" stroke="#e0e0e0" stroke-width="0.6"/><path d="M225.6,53 L228.6,56" stroke="#c2c2c2" stroke-width="0.7"/><circle cx="232.6" cy="60.4" r="0.55" fill="#c2c2c2"/><path d="M240.8,60.6 L241.3,58.6 L246.6,53.4 L248.2,55 L242.9,60.2 Z" fill="#b8b8b8"/><rect x="239.3" y="61.7" width="11" height="1" fill="#b8b8b8"/><rect x="257.8" y="55.6" width="6.6" height="5.2" rx="0.6" fill="none" stroke="#c2c2c2" stroke-width="1.1"/><path d="M258.6,61.6 L265.2,61.6 L265.2,56.4" stroke="#d0d0d0" stroke-width="0.8" fill="none"/><line x1="280" y1="58" x2="286.6" y2="58" stroke="#7a7a7a" stroke-width="1.3"/><circle cx="286.6" cy="58" r="1.2" fill="#666"/><path d="M291.1,57.0 L295.3,57.0 L293.20000000000005,59.3 Z" fill="#999"/><path d="M304.1,61.8 L304.1,58.3 L310.7,58.3 L310.7,55.1" stroke="#666" stroke-width="0.9" fill="none"/><circle cx="304.1" cy="61.8" r="1.1" fill="#555"/><circle cx="310.7" cy="55.1" r="1.0" fill="#555"/><path d="M315.0,57.0 L319.2,57.0 L317.1,59.3 Z" fill="#999"/><path d="M337.7,54.4 L337.7,62.0 M333.9,58.2 L341.5,58.2" stroke="#111" stroke-width="1.9"/><path d="M345.4,57.0 L349.59999999999997,57.0 L347.5,59.3 Z" fill="#777"/><rect x="363.6" y="54.6" width="7" height="7" rx="0.5" fill="#bbb"/><path d="M363.6,56.9 L370.6,56.9 M363.6,59.2 L370.6,59.2 M365.9,54.6 L365.9,61.6 M368.2,54.6 L368.2,61.6" stroke="#e8e8e8" stroke-width="0.45"/><path d="M374.8,57.0 L379.0,57.0 L376.90000000000003,59.3 Z" fill="#999"/><path d="M989.8,56.2 L989.8,54.5 L991.5,54.5 M994.3,54.5 L996,54.5 L996,56.2 M996,59.2 L996,60.9 L994.3,60.9 M991.5,60.9 L989.8,60.9 L989.8,59.2" stroke="#5a5a5a" stroke-width="0.9" fill="none"/><rect x="1001.4" y="55.3" width="4.9" height="5.3" fill="#fff" stroke="#777" stroke-width="0.9"/><rect x="1003.7" y="55.3" width="2.6" height="5.3" fill="#8a8a8a"/><path d="M1011.9,58.3 L1014.4,55.6 L1016.9,58.3 M1011.9,60.9 L1014.4,58.2 L1016.9,60.9" stroke="#5a5a5a" stroke-width="0.9" fill="none"/><rect x="6.2" y="177.1" width="15.7" height="7.6" stroke="#2a2a2a" stroke-width="0.8" fill="none"/><rect x="25.3" y="177.1" width="16.3" height="7.6" rx="1.2" stroke="#2a2a2a" stroke-width="0.8" fill="none"/><text x="52.2" y="182.2" font-size="3.2" fill="#333" text-anchor="middle">Text</text><text x="64.2" y="178.9" font-size="2.5" fill="#444" font-weight="bold">Heading</text><rect x="64.2" y="180.6" width="13.8" height="0.55" fill="#c4c4c4"/><rect x="64.2" y="181.9" width="13.8" height="0.55" fill="#c4c4c4"/><rect x="64.2" y="183.2" width="12.6" height="0.55" fill="#c4c4c4"/><ellipse cx="91" cy="180.7" rx="8" ry="5.3" stroke="#2a2a2a" stroke-width="0.8" fill="none"/><rect x="6.3" y="191.3" width="15.6" height="15.6" stroke="#2a2a2a" stroke-width="0.8" fill="none"/><circle cx="33.5" cy="199" r="7.4" stroke="#2a2a2a" stroke-width="0.8" fill="none"/><rect x="44.5" y="195.3" width="16" height="7.4" stroke="#2a2a2a" stroke-width="0.8" fill="none"/><line x1="45.9" y1="195.3" x2="45.9" y2="202.7" stroke="#555" stroke-width="0.6"/><line x1="59.1" y1="195.3" x2="59.1" y2="202.7" stroke="#555" stroke-width="0.6"/><path d="M72,191.5 L79.6,199 L72,206.5 L64.4,199 Z" stroke="#2a2a2a" stroke-width="0.8" fill="none"/><path d="M85.4,195.4 L98.8,195.4 L96.8,202.6 L83.4,202.6 Z" stroke="#2a2a2a" stroke-width="0.8" fill="none"/><path d="M8.5,212.6 L20,212.6 L22,217.3 L20,222 L8.5,222 L6.5,217.3 Z" stroke="#2a2a2a" stroke-width="0.8" fill="none"/><path d="M27.4,210 L39.6,217.3 L27.4,224.6 Z" stroke="#2a2a2a" stroke-width="0.8" fill="none"/><path d="M47.4,212.2 L47.4,222.5 A5.3,2 0 0 0 58,222.5 L58,212.2 A5.3,2 0 0 0 47.4,212.2 A5.3,2 0 0 0 58,212.2" stroke="#2a2a2a" stroke-width="0.8" fill="none"/><path d="M66.4,215.2 Q66.2,212.6 69.2,213.4 Q71,211.6 73.4,213 Q76.6,212 77,214.6 Q79.8,215.6 78.2,217.6 Q79.6,220.2 76.6,220.4 Q75.6,222.6 72.8,221.6 Q70.6,223 68.6,221.4 Q65.6,221.8 66,219.6 Q64,217.4 66.4,215.2 Z" stroke="#2a2a2a" stroke-width="0.8" fill="none"/><path d="M83,212 L99,212 L99,220.5 Q95,218 91,221 Q87,224 83,221.5 Z" stroke="#2a2a2a" stroke-width="0.8" fill="none"/><rect x="6.3" y="227.9" width="15.6" height="15.6" stroke="#2a2a2a" stroke-width="0.8" fill="none"/><line x1="6.3" y1="230.4" x2="21.9" y2="230.4" stroke="#333" stroke-width="0.5"/><line x1="9.2" y1="227.9" x2="9.2" y2="243.5" stroke="#333" stroke-width="0.5"/><path d="M25.2,230 L38.6,230 L41.7,232.3 L41.7,240.6 L28.9,240.6 L25.2,237.6 Z M25.2,230 L28.9,232.3 L41.7,232.3 M28.9,232.3 L28.9,240.6" stroke="#2a2a2a" stroke-width="0.8" fill="none"/><path d="M44.6,230 L58,230 L61,235.7 L58,241.4 L44.6,241.4 L47.4,235.7 Z" stroke="#2a2a2a" stroke-width="0.8" fill="none"/><path d="M66,231 L78,231 L80.5,240 L63.8,240 Z" stroke="#2a2a2a" stroke-width="0.8" fill="none"/><path d="M83,230 Q86,236 91,231.5 Q95,227.5 99,230.5 L99,240.5 Q95,237 91,240 Q86,244 83,239 Z" stroke="#2a2a2a" stroke-width="0.8" fill="none"/><path d="M8.4,246.2 L17.6,246.2 L20.1,248.8 L20.1,260.8 L8.4,260.8 Z M17.6,246.2 L17.6,248.8 L20.1,248.8" stroke="#2a2a2a" stroke-width="0.8" fill="none"/><path d="M30.6,246.2 L39.6,246.2 L39.6,260.8 L27.4,260.8 L27.4,249.6 Z" stroke="#2a2a2a" stroke-width="0.8" fill="none"/><path d="M45,247.5 L60.3,247.5 L60.3,254.5 L55,254.5 L52,258.5 L52,254.5 L45,254.5 Z" stroke="#2a2a2a" stroke-width="0.8" fill="none"/><circle cx="71.9" cy="247.6" r="1.5" stroke="#2a2a2a" stroke-width="0.8" fill="none"/><path d="M71.9,249.1 L71.9,255 M68.6,250.8 L75.2,250.8 M71.9,255 L68.8,260.4 M71.9,255 L75,260.4" stroke="#2a2a2a" stroke-width="0.8" fill="none"/><path d="M85.5,246 Q97,247.5 96.4,253.3 Q96.2,259 85.5,260.6 Q91,253.3 85.5,246 Z" stroke="#2a2a2a" stroke-width="0.8" fill="none"/><path d="M8,264 Q20.5,264.5 20.5,271.6 Q20.5,279 8,279.2 Z" stroke="#2a2a2a" stroke-width="0.8" fill="none"/><path d="M28,264.5 L41,264.5 Q37.5,271.6 41,278.8 L28,278.8 Q24.5,278.8 24.5,271.6 Q24.5,264.5 28,264.5 Z" stroke="#2a2a2a" stroke-width="0.8" fill="none"/><rect x="45" y="264.6" width="15" height="14.6" stroke="#2a2a2a" stroke-width="0.8" fill="none"/><rect x="64.6" y="264.6" width="15" height="14.6" stroke="#2a2a2a" stroke-width="0.8" fill="none"/><line x1="64.6" y1="266" x2="79.6" y2="266" stroke="#333" stroke-width="0.6"/><rect x="84" y="264.6" width="15" height="14.6" stroke="#2a2a2a" stroke-width="0.8" fill="none"/><line x1="85.4" y1="264.6" x2="85.4" y2="279.2" stroke="#333" stroke-width="0.6"/><rect x="6" y="283.2" width="16.3" height="13.8" stroke="#2a2a2a" stroke-width="0.8" fill="none"/><line x1="6" y1="285.8" x2="22.3" y2="285.8" stroke="#333" stroke-width="0.5"/><path d="M7,288.5 L9.5,288.5 M7,291 L9.5,291 M7,293.5 L9.5,293.5" stroke="#555" stroke-width="0.4"/><text x="30.8" y="290.8" font-size="2.2" fill="#333">List Item</text><path d="M46,297 Q52,297.5 52.5,293 Q52.5,289.5 49.5,287.5 Q47.5,284 52,283.5 L58,283.2" stroke="#333" stroke-width="0.7" fill="none"/><path d="M58.5,283.2 L56,281.8 L56.3,284.6 Z" fill="#333"/><path d="M65,296.6 L78.5,283.1" stroke="#333" stroke-width="2.6"/><path d="M65,296.6 L78.5,283.1" stroke="#f1f2f4" stroke-width="1.3"/><path d="M64.2,297.4 L65.2,292.2 L69.4,296.4 Z M79.3,282.3 L78.3,287.5 L74.1,283.3 Z" fill="#f1f2f4" stroke="#333" stroke-width="0.6"/><path d="M84.6,295 L94,285.6 L91.5,285 L98.8,282.6 L96.5,290 L95.8,287.4 L86.4,296.8 Z" fill="none" stroke="#333" stroke-width="0.7"/><line x1="6.6" y1="315.2" x2="20.6" y2="301.4" stroke="#333" stroke-width="0.4"/><line x1="26" y1="315.2" x2="40" y2="301.4" stroke="#555" stroke-width="0.4" stroke-dasharray="1,0.8"/><line x1="45" y1="315.2" x2="59.6" y2="300.6" stroke="#333" stroke-width="0.6"/><line x1="66.4" y1="314.4" x2="77.4" y2="303.2" stroke="#333" stroke-width="0.6"/><path d="M65.6,315.2 L66.3,312.2 L68.6,314.5 Z M78.2,302.4 L77.5,305.4 L75.2,303.1 Z" fill="#333"/><line x1="84.8" y1="315.2" x2="96.4" y2="303.6" stroke="#333" stroke-width="0.6"/><path d="M97.2,302.8 L96.5,305.8 L94.2,303.5 Z" fill="#333"/><line x1="6.2" y1="326.3" x2="22" y2="326.3" stroke="#222" stroke-width="1.1"/><line x1="26.4" y1="326.3" x2="38.6" y2="326.3" stroke="#333" stroke-width="0.4" stroke-dasharray="1.4,0.6"/><path d="M41,326.3 L38.4,325.3 L38.4,327.3 Z" fill="#333"/><text x="45" y="327" font-size="1.8" fill="#444">Label</text><line x1="50" y1="326.3" x2="58" y2="326.3" stroke="#333" stroke-width="0.4"/><path d="M60,326.3 L57.6,325.4 L57.6,327.2 Z" fill="#333"/><text x="64.6" y="327" font-size="1.8" fill="#444">Label</text><line x1="69.5" y1="326.3" x2="78" y2="326.3" stroke="#333" stroke-width="0.4"/><path d="M80,326.3 L77.6,325.4 L77.6,327.2 Z" fill="#333"/><line x1="84" y1="326.3" x2="98" y2="326.3" stroke="#333" stroke-width="0.6"/><rect x="89.5" y="325" width="2.6" height="2.6" fill="#333"/><path d="M99.5,326.3 L97,325.2 L97,327.4 Z" fill="#333"/></svg></body></html>
